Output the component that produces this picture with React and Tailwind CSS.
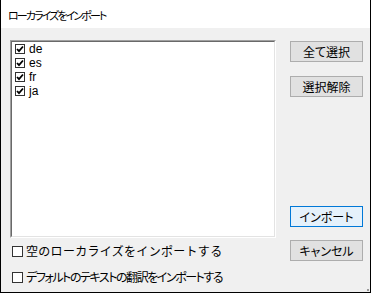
import React from 'react'

const jp = { fontFamily: '"Noto Sans CJK JP", "Liberation Sans", sans-serif' }

function ListCheck({ label }) {
    return (
        <div className='flex h-[14px] items-center gap-[4px] pl-[3px]'>
            <div className='flex h-[10px] w-[10px] items-center justify-center border border-[#333333] bg-white'>
                <svg width='8' height='8' viewBox='0 0 8 8'>
                    <path d='M1 4 L3 6.2 L7 1.5' fill='none' stroke='#000' strokeWidth='1.8' />
                </svg>
            </div>
            <span className='text-[12px] leading-none text-black' style={{ fontFamily: '"Liberation Sans", sans-serif' }}>{label}</span>
        </div>
    )
}

function Btn({ children, primary, className = '' }) {
    return (
        <button
            className={'flex h-[21px] w-[73px] items-center justify-center border text-[12px] leading-none text-black [font-feature-settings:"palt"] ' +
                (primary ? 'border-[#0078d7] bg-[#e5f1fb] ' : 'border-[#adadad] bg-[#e1e1e1] ') + className}
            style={jp}
        >
            {children}
        </button>
    )
}

function Option({ label, textClass }) {
    return (
        <div className='flex h-[26px] items-center gap-[3px] pl-[2px]'>
            <div className='h-[11px] w-[11px] border border-[#333333] bg-white' />
            <span className={'text-[12px] leading-none text-black ' + textClass} style={jp}>{label}</span>
        </div>
    )
}

export default function App() {
    return (
        <div className='relative flex h-[293px] w-[371px] flex-col border-x border-b border-black bg-[#f0f0f0]'>
            <div className='flex h-[28px] items-center bg-white pl-[7px] pt-[3px] text-[11px] leading-none tracking-[-1.9px] text-black [font-feature-settings:"palt"]' style={jp}>
                ローカライズをインポート
            </div>
            <div className='flex pl-[9px] pt-[12px]'>
                <div className='flex flex-col'>
                    {/* list box */}
                    <div className='h-[198px] w-[266px] border-l border-t border-b border-r border-l-[#a0a0a0] border-t-[#a0a0a0] border-b-white border-r-white'>
                        <div className='h-full w-full border border-l-[#696969] border-t-[#696969] border-b-[#e3e3e3] border-r-[#e3e3e3] bg-white'>
                            <ListCheck label='de' />
                            <ListCheck label='es' />
                            <ListCheck label='fr' />
                            <ListCheck label='ja' />
                        </div>
                    </div>
                    <Option label='空のローカライズをインポートする' textClass='tracking-[0.3px]' />
                    <Option label='デフォルトのテキストの翻訳をインポートする' textClass='tracking-[-1.45px] [font-feature-settings:"palt"]' />
                </div>
                <div className='ml-[14px] flex flex-col pt-[1px]'>
                    <Btn>全て選択</Btn>
                    <Btn className='mt-[14px]'>選択解除</Btn>
                    <Btn primary className='mt-[109px]'>インポート</Btn>
                    <Btn className='mt-[13px]'>キャンセル</Btn>
                </div>
            </div>
            <div className='absolute bottom-[1px] right-[1px] h-[2px] w-[2px] bg-[#999999]' />
        </div>
    )
}
